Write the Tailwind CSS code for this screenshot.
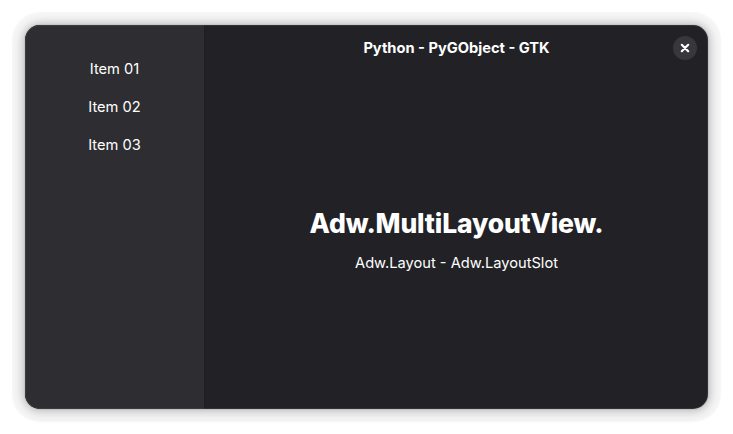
<!DOCTYPE html>
<html lang="en"><head><meta charset="utf-8"><title>Python - PyGObject - GTK</title>
<script src="https://cdn.jsdelivr.net/npm/@tailwindcss/browser@4"></script></head>
<body class="bg-white font-['Inter',sans-serif] text-white w-[733px] h-[434px] overflow-hidden p-[25px]">
<div class="relative flex w-[683px] h-[384px] rounded-[15px] overflow-hidden bg-[#222226] shadow-[0_0_0_1px_rgba(0,0,0,0.05),0_0_7px_1px_rgba(0,0,0,0.14),0_1px_12px_4px_rgba(0,0,0,0.12),0_0_1px_13px_rgba(0,0,0,0.03)]">
<aside class="w-[180px] shrink-0 bg-[#2e2e32] border-r border-[#1f1f23] pt-[25px] text-[14.667px] leading-[38px] text-center">
<div>Item 01</div><div>Item 02</div><div>Item 03</div>
</aside>
<main class="flex-1 flex flex-col">
<header class="relative h-[46px] flex items-center justify-center text-[14.667px] font-bold">Python - PyGObject - GTK
<button aria-label="Close" class="absolute right-[11px] top-[11px] size-6 rounded-full bg-[#38383c] flex items-center justify-center"><svg class="size-4" viewBox="0 0 16 16" stroke="white" stroke-width="2.2" stroke-linecap="round"><path d="M4.8 4.8l6.4 6.4M11.2 4.8l-6.4 6.4"/></svg></button></header>
<section class="flex flex-col items-center pt-[132px]"><h1 class="text-[26.5px] leading-[40px] font-extrabold tracking-[-0.16px]">Adw.MultiLayoutView.</h1><p class="text-[14.667px] leading-[20px] mt-[10px]">Adw.Layout - Adw.LayoutSlot</p></section>
</main>
<div class="absolute inset-0 rounded-[15px] shadow-[inset_0_0_0_1px_rgba(255,255,255,0.07)]"></div>
</div></body></html>
